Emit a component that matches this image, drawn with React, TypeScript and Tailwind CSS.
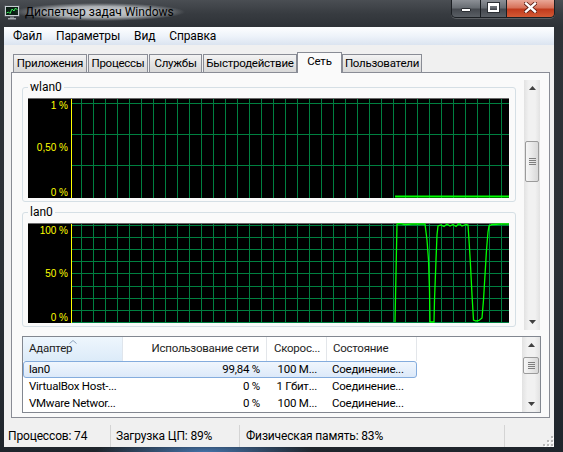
import type { ReactNode } from 'react'

const FONT = '[font-family:Roboto,Noto_Sans,sans-serif]'
const SMALL = 'text-[11.5px] tracking-[-0.25px]'

const TABS = [
  { label: 'Приложения', w: 'w-[74px]', ml: '' },
  { label: 'Процессы', w: 'w-[60px]', ml: 'ml-[1px]' },
  { label: 'Службы', w: 'w-[53px]', ml: 'ml-[1px]' },
  { label: 'Быстродействие', w: 'w-[94px]', ml: 'ml-[1px]' },
  { label: 'Сеть', w: 'w-[45px]', ml: '', active: true },
  { label: 'Пользователи', w: 'w-[80px]', ml: '' },
]

const ROWS = [
  { name: 'lan0', usage: '99,84 %', speed: '100 М...', state: 'Соединение...', selected: true },
  { name: 'VirtualBox Host-...', usage: '0 %', speed: '1 Гбит...', state: 'Соединение...' },
  { name: 'VMware Networ...', usage: '0 %', speed: '100 М...', state: 'Соединение...' },
]

const LAN_POINTS =
  '395,322 397,224 400,223.5 405,224.5 412,224 418,224 425,224 427,240 428.5,260 429.5,290 430,322 434,322 434.5,300 436,260 437,235 438,226 441,225 444,226.5 447,224 450,226 453,224.5 456,226.5 459,223.5 462,226 466,224.5 468,225 469,240 470.5,265 472,295 473.5,320 476,321 479,320.5 482,318 483.5,300 485,275 486.5,250 488,232 489,226 492,224.5 500,224 509,224'

function TitleIcon() {
  return (
    <svg width="16" height="16" viewBox="0 0 16 16">
      <rect x="0.5" y="1.5" width="15" height="11" rx="1" fill="#c9ced3" stroke="#4a4f55" />
      <rect x="2" y="3" width="12" height="8" fill="#0a1f14" />
      <polyline points="2.5,9 4.5,8 6,9.5 8,5 10,7 11.5,4 13.5,6" fill="none" stroke="#3bea5a" strokeWidth="1" />
      <rect x="6" y="12.5" width="4" height="1.5" fill="#7b8086" />
      <rect x="4" y="14" width="8" height="1.5" fill="#a3a8ad" />
    </svg>
  )
}

function WindowButtons() {
  return (
    <div className="flex h-[18px] overflow-hidden rounded-b-[5px] border border-t-0 border-[#1b1f23] shadow-[0_1px_0_rgba(255,255,255,0.2)]">
      <div className="flex w-[29px] items-start justify-center border-r border-[#1b1f23] bg-[linear-gradient(180deg,#8c9096_0%,#686d73_45%,#45494f_55%,#5a5f65_100%)]">
        <span className="mt-[8px] h-[4px] w-[10px] rounded-[1px] border border-[#2b2f34] bg-white" />
      </div>
      <div className="flex w-[26px] items-start justify-center border-r border-[#1b1f23] bg-[linear-gradient(180deg,#8c9096_0%,#686d73_45%,#45494f_55%,#5a5f65_100%)]">
        <span className="mt-[3px] h-[9px] w-[11px] border-[2px] border-t-[3px] border-white shadow-[0_0_0_1px_#2b2f34]" />
      </div>
      <div className="flex w-[47px] items-start justify-center bg-[linear-gradient(180deg,#e9a797_0%,#d7725a_45%,#c13b1d_55%,#d45a35_100%)]">
        <svg width="13" height="11" viewBox="0 0 13 11" className="mt-[2px]">
          <path d="M2 1.5L11 9.5M11 1.5L2 9.5" stroke="#5a1a10" strokeWidth="4" strokeLinecap="square" />
          <path d="M2 1.5L11 9.5M11 1.5L2 9.5" stroke="#ffffff" strokeWidth="2.4" strokeLinecap="square" />
        </svg>
      </div>
    </div>
  )
}

function Arrow({ up }: { up?: boolean }) {
  return (
    <div className="flex h-[16px] shrink-0 items-center justify-center">
      <svg width="7" height="4" viewBox="0 0 7 4">
        <path d={up ? 'M0 4L3.5 0L7 4Z' : 'M0 0L3.5 4L7 0Z'} fill="#404040" />
      </svg>
    </div>
  )
}

function ScrollBar({ className, thumb }: { className: string; thumb: string }) {
  return (
    <div
      className={`flex flex-col bg-[linear-gradient(90deg,#e2e2e2,#f1f1f1_30%,#f1f1f1_70%,#e2e2e2)] ${className}`}
    >
      <Arrow up />
      <div
        className={`mx-[1px] flex flex-col items-center justify-center gap-[1px] rounded-[2px] border border-[#9b9b9b] bg-[linear-gradient(90deg,#f6f6f6,#e8e8e8_50%,#d8d8d8)] ${thumb}`}
      >
        <span className="h-[1px] w-[7px] bg-[#7e7e7e]" />
        <span className="h-[1px] w-[7px] bg-[#7e7e7e]" />
        <span className="h-[1px] w-[7px] bg-[#7e7e7e]" />
        <span className="h-[1px] w-[7px] bg-[#7e7e7e]" />
      </div>
      <div className="flex-1" />
      <Arrow />
    </div>
  )
}

function Graph({
  top,
  hLines,
  labels,
  children,
}: {
  top: number
  hLines: number[]
  labels: { t: string; y: number }[]
  children: ReactNode
}) {
  const vLines = Array.from({ length: 36 }, (_, i) => 81.5 + i * 12)
  return (
    <svg width="481" height="100" viewBox={`28 ${top} 481 100`} className="block">
      <rect x="28" y={top} width="481" height="100" fill="#000" />
      <line x1="28" x2="509" y1={top + 0.5} y2={top + 0.5} stroke="#6a6a6a" />
      {vLines.map((x) => (
        <line key={x} x1={x} x2={x} y1={top + 1} y2={top + 100} stroke="#008040" />
      ))}
      {hLines.map((y) => (
        <line key={y} x1="72" x2="509" y1={y} y2={y} stroke="#008040" />
      ))}
      <line x1="71.5" x2="71.5" y1={top + 1} y2={top + 100} stroke="#ffff00" />
      {labels.map((l) => (
        <text
          key={l.t}
          x="68"
          y={l.y}
          textAnchor="end"
          fontSize="10"
          fill="#ffff00"
          fontFamily="Liberation Sans, Arial, sans-serif"
        >
          {l.t}
        </text>
      ))}
      {children}
    </svg>
  )
}

function GroupBox({ label, className, children }: { label: string; className?: string; children: ReactNode }) {
  return (
    <fieldset className={`rounded-[3px] border border-[#d5dfe5] pt-[4px] pr-[6px] pb-[3px] pl-[5px] ${className ?? ''}`}>
      <legend className="px-[2px] text-[12px] leading-[14px] text-black">{label}</legend>
      {children}
    </fieldset>
  )
}

function AdapterList() {
  return (
    <div className="mt-[6px] flex h-[77px] w-[519px] border border-[#828790] bg-white">
      <div className={`flex w-[499px] flex-col ${SMALL}`}>
        {/* header */}
        <div className="flex h-[24px] text-[#1e1e1e]">
          <div className="relative flex w-[100px] items-center border-r border-[#dfe5ec] bg-[linear-gradient(180deg,#eef6fd,#dcebf9)] pl-[6px]">
            <svg width="8" height="4" viewBox="0 0 8 4" className="absolute top-[3px] left-[46px]">
              <path d="M0.5 3.5L4 0.5L7.5 3.5" fill="none" stroke="#8fa4bd" />
            </svg>
            Адаптер
          </div>
          <div className="flex w-[144px] items-center justify-end border-r border-[#e3e6ea] pr-[7px]">
            Использование сети
          </div>
          <div className="flex w-[60px] items-center justify-end border-r border-[#e3e6ea] pr-[6px]">Скорос...</div>
          <div className="flex w-[90px] items-center border-r border-[#e3e6ea] pl-[6px]">Состояние</div>
          <div className="flex-1" />
        </div>
        {/* rows */}
        {ROWS.map((r) => (
          <div key={r.name} className="flex h-[17px] text-black">
            <div
              className={`flex w-[394px] items-center rounded-[3px] border ${
                r.selected
                  ? 'border-[#84acdd] bg-[linear-gradient(180deg,#f0f6fd,#dce9f9)]'
                  : 'border-transparent'
              }`}
            >
              <div className="w-[99px] overflow-hidden whitespace-nowrap pl-[5px]">{r.name}</div>
              <div className="w-[144px] pr-[7px] text-right">{r.usage}</div>
              <div className="w-[60px] pr-[10px] text-right">{r.speed}</div>
              <div className="w-[89px] pl-[5px]">{r.state}</div>
            </div>
          </div>
        ))}
      </div>
      <ScrollBar className="w-[18px]" thumb="mt-[4px] h-[17px]" />
    </div>
  )
}

function Grip() {
  const dots = [
    [9, 1],
    [9, 5],
    [5, 5],
    [9, 9],
    [5, 9],
    [1, 9],
  ]
  return (
    <svg width="12" height="12" viewBox="0 0 12 12">
      {dots.map(([x, y]) => (
        <g key={`${x}-${y}`}>
          <rect x={x + 1} y={y + 1} width="2" height="2" fill="#ffffff" />
          <rect x={x} y={y} width="2" height="2" fill="#b8b8b8" />
        </g>
      ))}
    </svg>
  )
}

export default function App() {
  return (
    <div
      className={`flex h-[452px] w-[563px] flex-col overflow-hidden bg-[radial-gradient(ellipse_110px_14px_at_205px_100%,rgba(80,140,210,0.75),transparent),linear-gradient(180deg,#4a4e53_0px,#373b40_14px,#2e3237_27px,#2b3035_60%,#1f252c_100%)] ${FONT}`}
    >
      {/* title bar */}
      <div className="flex h-[27px] shrink-0 items-start">
        <div className="mt-[4px] ml-[4px] w-[16px] shrink-0">
          <TitleIcon />
        </div>
        <div className="mt-[3px] ml-[-6px] rounded-full bg-[radial-gradient(closest-side,rgba(215,218,222,0.95)_0%,rgba(200,204,208,0.8)_60%,rgba(180,185,190,0)_100%)] px-[11px] text-[12px] leading-[18px] text-black">
          Диспетчер задач Windows
        </div>
        <div className="mr-[8px] ml-auto">
          <WindowButtons />
        </div>
      </div>

      {/* client */}
      <div className="flex flex-1 pr-[9px] pb-[5px] pl-[4px]">
        <div className="flex flex-1 flex-col bg-[#f0f0f0]">
          {/* menu */}
          <div className="flex h-[18px] items-center bg-[linear-gradient(180deg,#fdfeff_0%,#eef3fa_50%,#dbe4f0_100%)] pl-[2px] text-[12px] tracking-[-0.15px] text-black">
            <span className="px-[7px]">Файл</span>
            <span className="px-[7px]">Параметры</span>
            <span className="px-[7px]">Вид</span>
            <span className="px-[7px]">Справка</span>
          </div>

          <div className="flex flex-1 flex-col pt-[7px] pr-[4px] pl-[7px]">
            {/* tabs */}
            <div className={`relative z-10 flex h-[20px] items-end pl-[2px] text-black ${SMALL}`}>
              {TABS.map((t) =>
                t.active ? (
                  <div
                    key={t.label}
                    className={`mb-[-1px] flex h-[21px] items-center justify-center border border-b-0 border-[#898c95] bg-[#fafafa] pb-[2px] ${t.w} ${t.ml}`}
                  >
                    {t.label}
                  </div>
                ) : (
                  <div
                    key={t.label}
                    className={`flex h-[18px] items-center justify-center border border-b-0 border-[#898c95] bg-[linear-gradient(180deg,#f3f3f3,#e4e4e4_50%,#d8d8d8)] ${t.w} ${t.ml}`}
                  >
                    {t.label}
                  </div>
                ),
              )}
            </div>

            {/* tab page */}
            <div className="flex h-[346px] flex-col border border-[#898c95] bg-[#fafafa] pt-[5px] pl-[10px]">
              <div className="flex h-[252px]">
                <div className="flex w-[494px] flex-col pt-[2px]">
                  <GroupBox label="wlan0">
                    <Graph
                      top={98}
                      hLines={[103.5, 134.5, 165.5]}
                      labels={[
                        { t: '1 %', y: 108.5 },
                        { t: '0,50 %', y: 151 },
                        { t: '0 %', y: 195.5 },
                      ]}
                    >
                      <line x1="395" x2="509" y1="196.5" y2="196.5" stroke="#00ff00" strokeWidth="2" />
                    </Graph>
                  </GroupBox>
                  <GroupBox label="lan0" className="mt-[3px]">
                    <Graph
                      top={223}
                      hLines={[225.5, 237.5, 249.5, 261.5, 273.5, 286.5, 298.5, 310.5, 322.5]}
                      labels={[
                        { t: '100 %', y: 233.5 },
                        { t: '50 %', y: 276.5 },
                        { t: '0 %', y: 320.5 },
                      ]}
                    >
                      <polyline points={LAN_POINTS} fill="none" stroke="#00ff00" strokeWidth="1.3" />
                    </Graph>
                  </GroupBox>
                </div>
                <ScrollBar className="ml-[8px] mt-[2px] w-[16px]" thumb="mt-[45px] h-[41px]" />
              </div>
              <AdapterList />
            </div>
          </div>

          {/* status bar */}
          <div className="mt-[7px] flex h-[22px] items-stretch text-[12px] tracking-[-0.15px] text-black">
            <div className="flex w-[107px] items-center border-r border-[#d4d4d4] pl-[4px]">Процессов: 74</div>
            <div className="flex w-[129px] items-center border-r border-[#d4d4d4] pl-[5px]">Загрузка ЦП: 89%</div>
            <div className="flex w-[265px] items-center border-r border-[#d4d4d4] pl-[6px]">Физическая память: 83%</div>
            <div className="flex flex-1 items-end justify-end">
              <Grip />
            </div>
          </div>
        </div>
      </div>
    </div>
  )
}
